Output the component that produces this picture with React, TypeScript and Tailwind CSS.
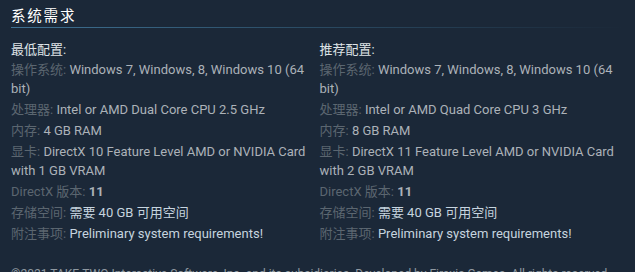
import React from "react";

type Row = { label: string; value: React.ReactNode };

const minRows: Row[] = [
  { label: "操作系统:", value: "Windows 7, Windows, 8, Windows 10 (64 bit)" },
  { label: "处理器:", value: "Intel or AMD Dual Core CPU 2.5 GHz" },
  { label: "内存:", value: "4 GB RAM" },
  { label: "显卡:", value: "DirectX 10 Feature Level AMD or NVIDIA Card with 1 GB VRAM" },
  { label: "DirectX 版本:", value: <span className="font-bold">11</span> },
  { label: "存储空间:", value: <span className="text-[#c6d4df]">需要 40 GB 可用空间</span> },
  { label: "附注事项:", value: <span className="text-[#c6d4df]">Preliminary system requirements!</span> },
];

const recRows: Row[] = [
  { label: "操作系统:", value: "Windows 7, Windows, 8, Windows 10 (64 bit)" },
  { label: "处理器:", value: "Intel or AMD Quad Core CPU 3 GHz" },
  { label: "内存:", value: "8 GB RAM" },
  { label: "显卡:", value: "DirectX 11 Feature Level AMD or NVIDIA Card with 2 GB VRAM" },
  { label: "DirectX 版本:", value: <span className="font-bold">11</span> },
  { label: "存储空间:", value: <span className="text-[#c6d4df]">需要 40 GB 可用空间</span> },
  { label: "附注事项:", value: <span className="text-[#c6d4df]">Preliminary system requirements!</span> },
];

function Col({ title, rows }: { title: string; rows: Row[] }) {
  return (
    <div>
      <div className="text-[#dfe3e6] text-[13px] leading-[19px] mb-[1px]">{title}</div>
      <ul>
        {rows.map((r, i) => (
          <li key={i} className="text-[13px] leading-[19px] mb-[2px] text-[#acb2b8]">
            <span className="text-[#5b6670]">{r.label}</span> {r.value}
          </li>
        ))}
      </ul>
    </div>
  );
}

export default function App() {
  return (
    <div
      className="w-[635px] h-[272px] overflow-hidden bg-[#1b2838] px-[11px]"
      style={{ fontFamily: 'Roboto, "Noto Sans CJK SC", Arial, sans-serif' }}
    >
      <div className="pt-[6px] pb-[12px]">
        <h2 className="text-[14.5px] leading-[21px] tracking-[1.8px] text-white font-normal">系统需求</h2>
        <div className="h-[1px] w-full bg-gradient-to-r from-[#3f7294] via-[#2a4a62] to-transparent" />
      </div>
      <div className="grid grid-cols-2 gap-x-[4px]">
        <Col title="最低配置:" rows={minRows} />
        <Col title="推荐配置:" rows={recRows} />
      </div>
      <div className="mt-[21px] text-[12px] leading-[16px] text-[#8f98a0] whitespace-nowrap">
        ©2021 TAKE-TWO Interactive Software, Inc. and its subsidiaries. Developed by Firaxis Games. All rights reserved.
      </div>
    </div>
  );
}
